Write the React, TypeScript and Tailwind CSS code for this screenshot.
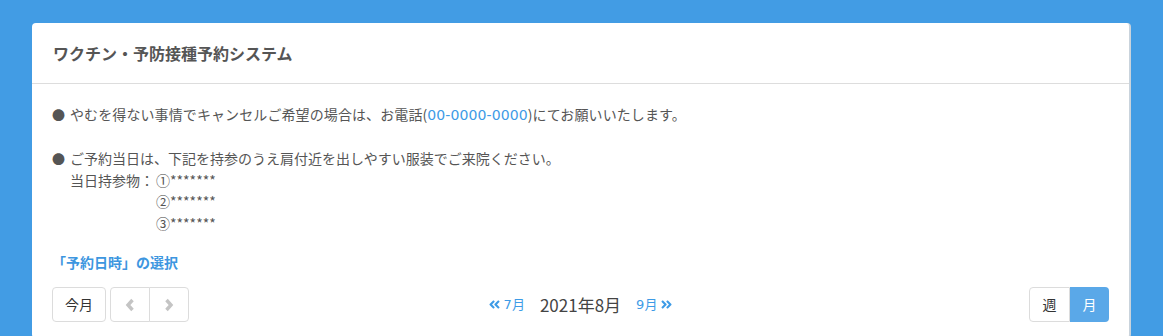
import { FaAngleDoubleLeft, FaAngleDoubleRight } from 'react-icons/fa'

const font = { fontFamily: '"Noto Sans CJK JP", "Noto Sans", sans-serif' }
const latin = { fontFamily: '"DejaVu Sans", "Noto Sans CJK JP", sans-serif' }

function Chevron({ dir }: { dir: 'left' | 'right' }) {
	return (
		<svg width="10" height="14" viewBox="0 0 10 14" className="text-[#c4c4c4]">
			<path
				d={dir === 'left' ? 'M7.5 2 L3 7 L7.5 12' : 'M2.5 2 L7 7 L2.5 12'}
				fill="none"
				stroke="currentColor"
				strokeWidth="3.4"
				strokeLinejoin="miter"
			/>
		</svg>
	)
}

function Bullet({ children }: { children: React.ReactNode }) {
	return (
		<div className="flex">
			<span className="w-[18px] shrink-0 text-[13px] text-[#555]">●</span>
			<div>{children}</div>
		</div>
	)
}

export default function App() {
	return (
		<div
			className="h-[336px] w-[1163px] overflow-hidden bg-[#429ce4] pt-[23px] pl-[32px] pr-[32px]"
			style={font}
		>
			<div className="rounded-[4px] border-r-2 border-r-[#c9d3dc] bg-white">
				<div className="flex h-[61px] items-center border-b border-[#dddddd] px-[21px]">
					<h1 className="text-[16px] font-bold text-[#555]">
						ワクチン・予防接種予約システム
					</h1>
				</div>
				<div className="px-[20px] pt-[20px] text-[14px] leading-[21.6px] text-[#555]">
					<Bullet>
						<span className="tracking-[0.1px]">
							やむを得ない事情でキャンセルご希望の場合は、お電話(
							<span className="text-[#3d9be6]" style={latin}>
								00-0000-0000
							</span>
							)にてお願いいたします。
						</span>
					</Bullet>
					<div className="h-[21.6px]" />
					<Bullet>
						<div>ご予約当日は、下記を持参のうえ肩付近を出しやすい服装でご来院ください。</div>
						<div className="flex">
							<span className="pr-[2px]">当日持参物：</span>
							<div>
								<div>①*******</div>
								<div>②*******</div>
								<div>③*******</div>
							</div>
						</div>
					</Bullet>
					<div className="mt-[17px] text-[14px] font-bold text-[#3d96e0]">
						「予約日時」の選択
					</div>
					<div className="mt-[14px] flex items-center justify-between pb-4">
						<div className="flex w-[200px] gap-[4px]">
							<button className="h-[35px] w-[54px] rounded-[4px] border border-[#dcdcdc] bg-white text-[14px] text-[#333]">
								今月
							</button>
							<div className="flex">
								<button className="flex h-[35px] w-[40px] items-center justify-center rounded-l-[4px] border border-[#dcdcdc] bg-white">
									<Chevron dir="left" />
								</button>
								<button className="-ml-px flex h-[35px] w-[40px] items-center justify-center rounded-r-[4px] border border-[#dcdcdc] bg-white">
									<Chevron dir="right" />
								</button>
							</div>
						</div>
						<div className="flex items-center gap-[15px]">
							<span className="flex items-center gap-[3px] text-[13px] text-[#3d9be6]">
								<FaAngleDoubleLeft size={13} />
								<span>
									<span style={latin}>7</span>月
								</span>
							</span>
							<span className="text-[17px] text-[#444]">2021年8月</span>
							<span className="flex items-center gap-[3px] text-[13px] text-[#3d9be6]">
								<span>
									<span style={latin}>9</span>月
								</span>
								<FaAngleDoubleRight size={13} />
							</span>
						</div>
						<div className="flex w-[200px] justify-end">
							<button className="h-[35px] w-[41px] rounded-l-[4px] border border-[#dcdcdc] bg-white text-[14px] text-[#333]">
								週
							</button>
							<button className="h-[35px] w-[39px] rounded-r-[4px] bg-[#5aa8e8] text-[14px] text-white">
								月
							</button>
						</div>
					</div>
				</div>
			</div>
		</div>
	)
}
